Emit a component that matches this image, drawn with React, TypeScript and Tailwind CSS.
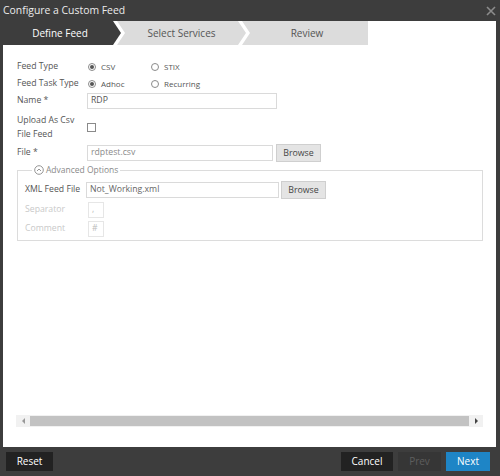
function Radio({ checked, label }: { checked?: boolean; label: string }) {
  return (
    <div className="flex items-center w-[63px]">
      <span className="w-[8px] h-[8px] rounded-full border border-[#8a8a8a] flex items-center justify-center bg-white">
        {checked && <span className="w-[4px] h-[4px] rounded-full bg-[#555]" />}
      </span>
      <span className="ml-[5px] text-[8px] text-[#555]">{label}</span>
    </div>
  )
}

function BrowseButton() {
  return (
    <button className="h-[18px] w-[45px] bg-[#e4e4e4] border border-[#cfcfcf] text-[8.8px] text-[#444] leading-none">
      Browse
    </button>
  )
}

export default function App() {
  return (
    <div
      className="w-[500px] h-[476px] bg-[#3d3d3d] flex flex-col overflow-hidden"
      style={{ fontFamily: '"Open Sans", "Noto Sans", sans-serif' }}
    >
      {/* Title bar */}
      <div className="h-[21px] flex items-center justify-between pl-[3px] pr-[4px]">
        <span className="text-[10.4px] text-[#ececec] leading-none">Configure a Custom Feed</span>
        <svg width="10" height="10" viewBox="0 0 10 10" className="mt-[1px]">
          <path d="M1 1 L9 9 M9 1 L1 9" stroke="#8c8c8c" strokeWidth="1.6" />
        </svg>
      </div>

      {/* Body */}
      <div className="flex-1 ml-[3px] mr-[4px] bg-white flex flex-col">
        {/* Steps */}
        <div className="h-[24px] flex">
          <div className="w-[118px] bg-[#3d3d3d] flex items-center justify-center pr-[4px] [clip-path:polygon(0_0,calc(100%-8px)_0,100%_50%,calc(100%-8px)_100%,0_100%)]">
            <span className="text-[10px] text-white">Define Feed</span>
          </div>
          <div className="-ml-[4px] w-[129px] bg-[#dcdcdc] flex items-center justify-center [clip-path:polygon(0_0,calc(100%-8px)_0,100%_50%,calc(100%-8px)_100%,0_100%,8px_50%)]">
            <span className="text-[10px] text-[#555]">Select Services</span>
          </div>
          <div className="-ml-[4px] w-[126px] bg-[#dcdcdc] flex items-center justify-center pl-[4px] [clip-path:polygon(0_0,100%_0,100%_100%,0_100%,8px_50%)]">
            <span className="text-[10px] text-[#555]">Review</span>
          </div>
        </div>

        {/* Form */}
        <div className="pl-[14px] pt-[13px] text-[8.7px] text-[#555]">
          <div className="h-[17px] flex items-center">
            <span className="w-[71px]">Feed Type</span>
            <Radio checked label="CSV" />
            <Radio label="STIX" />
          </div>
          <div className="h-[17px] flex items-center">
            <span className="w-[71px]">Feed Task Type</span>
            <Radio checked label="Adhoc" />
            <Radio label="Recurring" />
          </div>
          <div className="h-[17px] flex items-center">
            <span className="w-[70px]">Name *</span>
            <div className="w-[190px] h-[16px] border border-[#dadada] flex items-center pl-[3px] text-[#555]">
              RDP
            </div>
          </div>
          <div className="h-[34px] flex items-center">
            <span className="w-[70px] leading-[14px] pt-[1px]">
              Upload As Csv
              <br />
              File Feed
            </span>
            <span className="w-[9px] h-[9px] border border-[#8a8a8a] mt-[2px]" />
          </div>
          <div className="h-[20px] flex items-center">
            <span className="w-[70px]">File *</span>
            <div className="w-[186px] h-[16px] border border-[#dadada] flex items-center pl-[3px] text-[#8a8a8a]">
              rdptest.csv
            </div>
            <div className="ml-[3px]">
              <BrowseButton />
            </div>
          </div>

          <fieldset className="mt-[1px] w-[466px] h-[77px] border border-[#dcdcdc] pl-[7px]">
            <legend className="ml-[7px] px-[2px] flex items-center text-[8.5px] text-[#8a8a8a] leading-[12px]">
              <svg width="10" height="10" viewBox="0 0 10 10" className="mr-[2px]">
                <circle cx="5" cy="5" r="4.3" fill="none" stroke="#8a8a8a" strokeWidth="0.9" />
                <path d="M3 6 L5 4 L7 6" fill="none" stroke="#8a8a8a" strokeWidth="0.9" />
              </svg>
              Advanced Options
            </legend>
            <div className="h-[18px] mt-[5px] flex items-center">
              <span className="w-[61px] text-[#555]">XML Feed File</span>
              <div className="w-[193px] h-[16px] border border-[#dadada] flex items-center pl-[3px] text-[#666]">
                Not_Working.xml
              </div>
              <div className="ml-[2px]">
                <BrowseButton />
              </div>
            </div>
            <div className="h-[16px] mt-[3px] flex items-center">
              <span className="w-[63px] text-[#c9c9c9]">Separator</span>
              <div className="w-[16px] h-[16px] border border-[#e6e6e6] flex items-center pl-[3px] text-[#bbb]">
                ,
              </div>
            </div>
            <div className="h-[16px] mt-[3px] flex items-center">
              <span className="w-[63px] text-[#c9c9c9]">Comment</span>
              <div className="w-[16px] h-[16px] border border-[#e6e6e6] flex items-center pl-[3px] text-[#bbb]">
                #
              </div>
            </div>
          </fieldset>
        </div>

        {/* Horizontal scrollbar */}
        <div className="mt-auto mb-[20px] ml-[13px] w-[467px] h-[12px] flex bg-[#f1f1f1]">
          <div className="w-[14px] h-full flex items-center justify-center">
            <span className="w-0 h-0 border-y-[3px] border-y-transparent border-r-[3px] border-r-[#999]" />
          </div>
          <div className="flex-1 my-[1px] bg-[#c2c2c2]" />
          <div className="w-[14px] h-full flex items-center justify-center">
            <span className="w-0 h-0 border-y-[3px] border-y-transparent border-l-[3px] border-l-[#444]" />
          </div>
        </div>
      </div>

      {/* Footer */}
      <div className="h-[29px] flex items-center pl-[6px] pr-[10px]">
        <button className="w-[47px] h-[19px] bg-[#222] text-white text-[10px]">Reset</button>
        <div className="ml-auto flex gap-[5px]">
          <button className="w-[52px] h-[19px] bg-[#222] text-white text-[10px]">Cancel</button>
          <button className="w-[43px] h-[19px] bg-[#363636] text-[#5e5e5e] text-[10px]">Prev</button>
          <button className="w-[44px] h-[19px] bg-[#1e85c6] text-white text-[10px]">Next</button>
        </div>
      </div>
    </div>
  )
}
